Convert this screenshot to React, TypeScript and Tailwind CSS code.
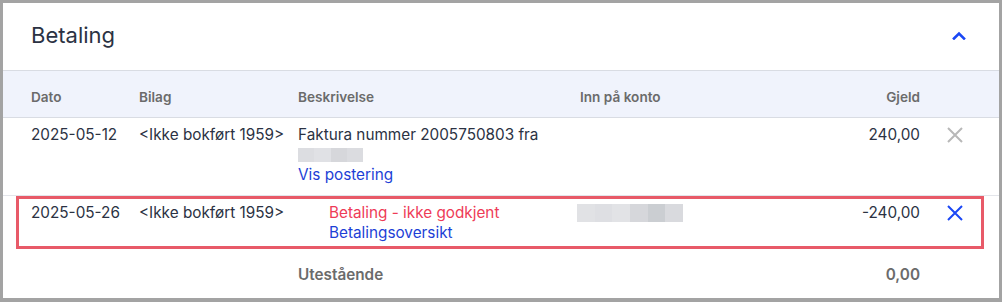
import React from "react";

const cols = "grid grid-cols-[108px_159px_282px_200px_140px_1fr] pl-[28px]";

function ChevronUp() {
  return (
    <svg width="14" height="9" viewBox="0 0 14 9" fill="none">
      <path d="M2 7.5 L7 2.5 L12 7.5" stroke="#1a47f5" strokeWidth="2.6" strokeLinecap="square" />
    </svg>
  );
}

function Cross({ color }: { color: string }) {
  return (
    <svg width="16" height="16" viewBox="0 0 16 16" fill="none">
      <path d="M1 1 L15 15 M15 1 L1 15" stroke={color} strokeWidth="2" />
    </svg>
  );
}

// sladdet felt (uskarpt i skjermbildet)
function Blur({ shades, w, h }: { shades: string[]; w: number; h: number }) {
  return (
    <div className="flex" style={{ width: w, height: h }}>
      {shades.map((c, i) => (
        <div key={i} className="h-full flex-1" style={{ backgroundColor: c }} />
      ))}
    </div>
  );
}

export default function App() {
  return (
    <div
      className="h-[302px] w-[1002px] bg-[#a3a3a3] pt-[3px] pl-[3px] pr-[3px] pb-[4px] text-[15.3px] leading-[20px] text-[#2b3243]"
      style={{ fontFamily: "Inter, 'Noto Sans', sans-serif" }}
    >
      <div className="flex h-full flex-col bg-white">
        <div className="flex h-[68px] items-center justify-between border-b border-[#d9dce3] pb-[3px] pl-[28px] pr-[33px]">
          <h2 className="text-[22px] text-[#2b3243]">Betaling</h2>
          <ChevronUp />
        </div>

        <div className={`${cols} h-[47px] items-center border-b border-[#d9dce3] bg-[#f0f3fc] pt-[5px] text-[13.6px] font-semibold text-[#6b6b6b]`}>
          <div>Dato</div>
          <div>Bilag</div>
          <div>Beskrivelse</div>
          <div>Inn på konto</div>
          <div className="text-right">Gjeld</div>
          <div />
        </div>

        <div className={`${cols} border-b border-[#e3e5ea] pt-[7px] pb-[10px]`}>
          <div>2025-05-12</div>
          <div>&lt;Ikke bokført 1959&gt;</div>
          <div className="flex flex-col">
            <span>Faktura nummer 2005750803 fra</span>
            <div className="flex h-[20px] items-center">
              <Blur w={65} h={14} shades={["#dcdde1", "#e0e1e5", "#d6d7db", "#dbdce0"]} />
            </div>
            <span className="text-[#1d3fd6]">Vis postering</span>
          </div>
          <div />
          <div className="text-right">240,00</div>
          <div className="pl-[27px] pt-[2px]">
            <Cross color="#b8b8b8" />
          </div>
        </div>

        <div className="relative">
          <div className={`${cols} pt-[7px] pb-[6px]`}>
            <div>2025-05-26</div>
            <div>&lt;Ikke bokført 1959&gt;</div>
            <div className="flex flex-col pl-[31px]">
              <span className="text-[#ee3b57]">Betaling - ikke godkjent</span>
              <span className="text-[#1d3fd6]">Betalingsoversikt</span>
            </div>
            <div className="-ml-[3px] pt-[1px]">
              <Blur w={106} h={18} shades={["#e1e2e5", "#dedfe3", "#e2e3e6", "#d6d7db", "#cbced2", "#d9dade"]} />
            </div>
            <div className="text-right">-240,00</div>
            <div className="pl-[27px] pt-[2px]">
              <Cross color="#1a47f5" />
            </div>
          </div>
          <div className="absolute inset-y-0 left-[13px] right-[15px] border-[3px] border-[#e85a68]" />
        </div>

        <div className={`${cols} flex-1 items-center pt-[3px] font-semibold text-[#6b6b6b]`}>
          <div />
          <div />
          <div>Utestående</div>
          <div />
          <div className="text-right">0,00</div>
          <div />
        </div>
      </div>
    </div>
  );
}
